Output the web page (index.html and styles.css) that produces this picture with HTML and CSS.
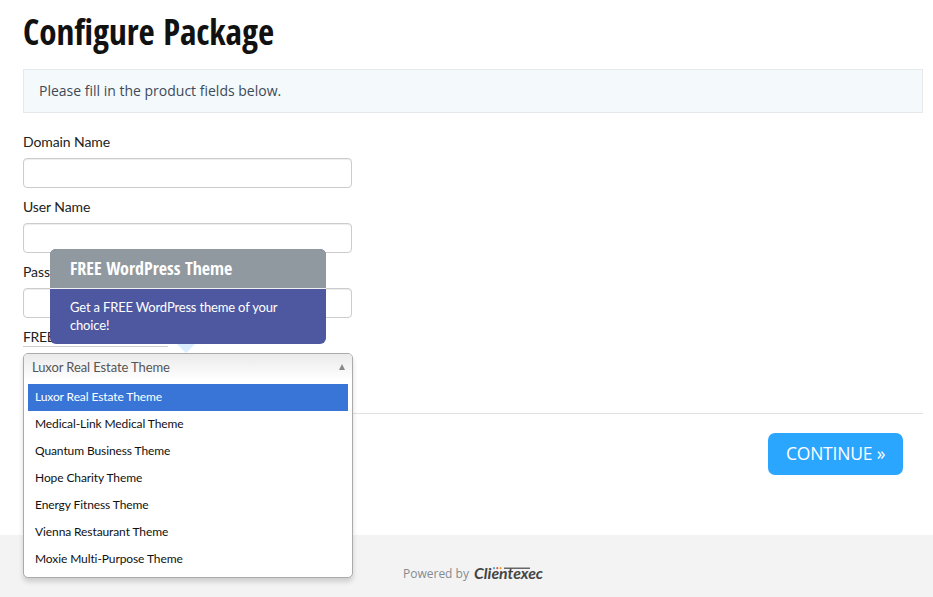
FILE: index.html
```html
<!DOCTYPE html>
<html lang="en">
<head>
<meta charset="utf-8">
<title>Configure Package</title>
<link rel="stylesheet" href="styles.css">
</head>
<body>
<main class="page">
  <h1 class="title">Configure Package</h1>
  <p class="notice">Please fill in the product fields below.</p>
  <form class="form">
    <div class="field"><label class="label" for="domain">Domain Name</label><input class="input" id="domain" type="text"></div>
    <div class="field"><label class="label" for="user">User Name</label><input class="input" id="user" type="text"></div>
    <div class="field"><label class="label" for="pass">Password</label><input class="input" id="pass" type="password"></div>
    <div class="field theme">
      <span class="label hint">FREE WordPress Theme</span>
      <div class="tooltip">
        <h2 class="tip-title">FREE WordPress Theme</h2>
        <p class="tip-body">Get a FREE WordPress theme of your<br>choice!</p>
      </div>
      <div class="select">
        <div class="selected"><span>Luxor Real Estate Theme</span><i class="arrow"></i></div>
        <ul class="options">
          <li class="option active">Luxor Real Estate Theme</li>
          <li class="option">Medical-Link Medical Theme</li>
          <li class="option">Quantum Business Theme</li>
          <li class="option">Hope Charity Theme</li>
          <li class="option">Energy Fitness Theme</li>
          <li class="option">Vienna Restaurant Theme</li>
          <li class="option">Moxie Multi-Purpose Theme</li>
        </ul>
      </div>
    </div>
    <div class="actions"><button class="continue" type="button">CONTINUE »</button></div>
  </form>
</main>
<footer class="footer">
  <span class="powered">Powered by</span>
  <svg class="logo" width="72" height="20" viewBox="0 0 72 20">
    <text class="wordmark" x="1" y="15.5" textLength="69" lengthAdjust="spacingAndGlyphs">Clientexec</text>
    <path class="bar" d="M31 5.2H57"/>
    <circle cx="21" cy="5.2" r="1.1" fill="#3fa9e0"/><circle cx="24.3" cy="5.2" r="1.1" fill="#e85c4a"/><circle cx="27.6" cy="5.2" r="1.1" fill="#f0a030"/>
  </svg>
</footer>
</body>
</html>
```
FILE: styles.css
```css
* { box-sizing: border-box; }
body { margin: 0; height: 597px; overflow: hidden; background: #fff; color: #222; font-family: Lato, "Open Sans", sans-serif; }
.page { height: 535px; padding: 9px 10px 0 23px; }
.title { margin: 0; height: 60px; width: max-content; font: bold 35px/46px "Open Sans Condensed", "Open Sans", sans-serif; font-stretch: 75%; letter-spacing: -.03px; color: #111; white-space: nowrap; }
.notice { margin: 0; height: 44px; padding: 0 15px; border: 1px solid #e5e9eb; background: #f4f9fc; color: #3d4a57; font: 14px/42px "Open Sans", sans-serif; }
.form { margin: 0; padding-top: 20px; }
.field { height: 65px; }
.label { display: block; height: 25px; line-height: 17px; font-size: 14px; letter-spacing: -.1px; }
.input { display: block; width: 329px; height: 30px; padding: 4px 8px; border: 1px solid #ccc; border-radius: 4px; background: #fff; box-shadow: inset 0 1px 1px rgba(0,0,0,.075); }
.theme { position: relative; }
.hint { width: 145px; height: 19px; border-bottom: 1px solid #ccc; letter-spacing: -.35px; white-space: nowrap; }
.select { position: absolute; top: 25px; left: 0; width: 330px; height: 225px; border: 1px solid #aaa; border-radius: 5px; background: #fff; box-shadow: 0 4px 5px rgba(0,0,0,.15); }
.selected { display: flex; align-items: center; justify-content: space-between; height: 26px; padding: 0 7px 0 8px; border-radius: 4px 4px 0 0; background: linear-gradient(#eaeaea, #fff); color: #555; font-size: 13px; letter-spacing: -.1px; }
.arrow { border: 3.5px solid transparent; border-top: 0; border-bottom: 6px solid #888; }
.options { margin: 4px 4px 0; padding: 0; list-style: none; }
.option { height: 27px; padding-left: 7px; color: #111; font-size: 12px; line-height: 26px; letter-spacing: -.1px; }
.active { background: #3875d7; color: #fff; }
.tooltip { position: absolute; z-index: 2; top: -79px; left: 27px; width: 276px; height: 95px; border-radius: 6px; background: #4d58a1; color: #fff; }
.tooltip::after { content: ""; position: absolute; top: 95px; left: 127px; border: 9px solid transparent; border-bottom: 0; border-top-color: #daeeff; }
.tip-title { margin: 0; height: 40px; padding-left: 20px; border-bottom: 1px solid #f0f0f0; border-radius: 6px 6px 0 0; background: #9099a0; font: bold 18px/39px "Open Sans Condensed", "Open Sans", sans-serif; font-stretch: 75%; white-space: nowrap; }
.tip-body { margin: 0; padding: 9px 0 0 20px; font-size: 13px; line-height: 18px; letter-spacing: -.17px; white-space: nowrap; }
.actions { height: 62px; margin-top: 20px; padding: 19px 20px 0 0; border-top: 1px solid #e2e2e2; text-align: right; }
.continue { width: 135px; height: 42px; padding: 0 0 3px; border: 0; border-radius: 7px; background: #2ba6ff; color: #fff; font: 17.5px/38px "Open Sans", sans-serif; font-stretch: 93%; letter-spacing: -.2px; white-space: nowrap; }
.footer { display: flex; height: 62px; padding: 28px 0 0 403px; background: #f3f3f3; }
.powered { width: 70px; color: #858b91; font: 12px/22px "Open Sans", sans-serif; white-space: nowrap; }
.logo { display: block; overflow: visible; }
.wordmark { fill: #444; font: italic bold 15px Lato, sans-serif; }
.bar { stroke: #444; stroke-width: 1.2; }
```
